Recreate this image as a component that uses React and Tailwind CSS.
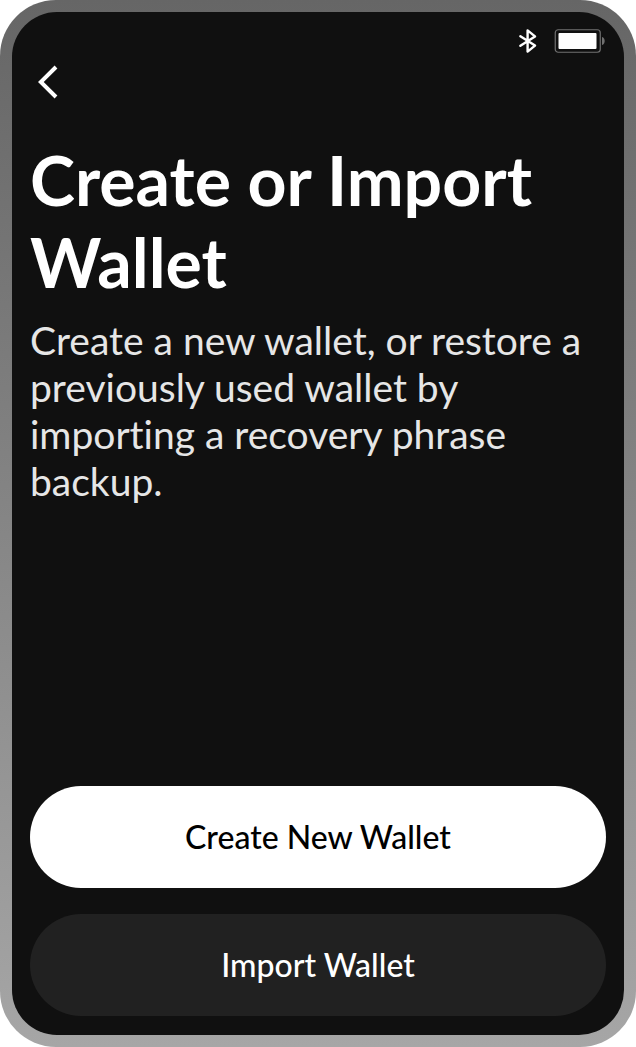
import React from 'react';

const BluetoothIcon = () => (
  <svg width="18" height="24" viewBox="0 0 18 24" fill="none" stroke="white" strokeWidth="2.4" strokeLinejoin="round" strokeLinecap="round" aria-label="Bluetooth on">
    <path d="M1.4 7.2L16 16.6L8.6 22.6V1.4L16 7.4L1.4 16.8" />
  </svg>
);

const BatteryIcon = () => (
  <svg width="52" height="24" viewBox="0 0 52 24" fill="none" aria-label="Battery full">
    <rect x="1.25" y="0.75" width="45" height="22.5" rx="3" stroke="#707070" strokeWidth="1.2" />
    <rect x="4.5" y="4" width="38" height="16" rx="1" fill="white" />
    <path d="M48 8C51.6 9 51.6 15 48 16Z" fill="#707070" />
  </svg>
);

const StatusBar = () => (
  <div className="flex items-center justify-end gap-[17px] h-6 mt-[17px]">
    <BluetoothIcon />
    <BatteryIcon />
  </div>
);

const BackButton = () => (
  <button type="button" aria-label="Back" className="self-start p-2 mt-1">
    <svg width="20" height="34" viewBox="0 0 20 34" fill="none" stroke="white" strokeWidth="4">
      <path d="M18 2L2.8 17L18 32" />
    </svg>
  </button>
);

const ActionButton = ({ children, className }) => (
  <button type="button" className={`w-full rounded-full py-7 text-[32px] leading-[46px] font-medium ${className}`}>
    {children}
  </button>
);

export default function App() {
  return (
    <div className="bg-white font-['Lato',sans-serif] [font-variant-ligatures:none]">
      {/* Device frame */}
      <div className="flex min-h-screen rounded-[56px] p-3 bg-linear-to-b from-[#666666] to-[#a6a6a6]">
        <main className="flex flex-1 flex-col rounded-[45px] bg-[#101010] px-[18px] pb-[19px]">
          <StatusBar />
          <BackButton />

          <h1 className="mt-8 text-[68px] leading-[82px] font-bold text-white">
            Create or Import Wallet
          </h1>
          <p className="mt-3.5 text-[39px] leading-[47px] text-[#e6e6e6]">
            Create a new wallet, or restore a previously used wallet by importing a recovery phrase backup.
          </p>

          <div className="mt-auto flex flex-col gap-[26px] pt-10">
            <ActionButton className="bg-white text-black">Create New Wallet</ActionButton>
            <ActionButton className="bg-[#212121] text-white">Import Wallet</ActionButton>
          </div>
        </main>
      </div>
    </div>
  );
}
